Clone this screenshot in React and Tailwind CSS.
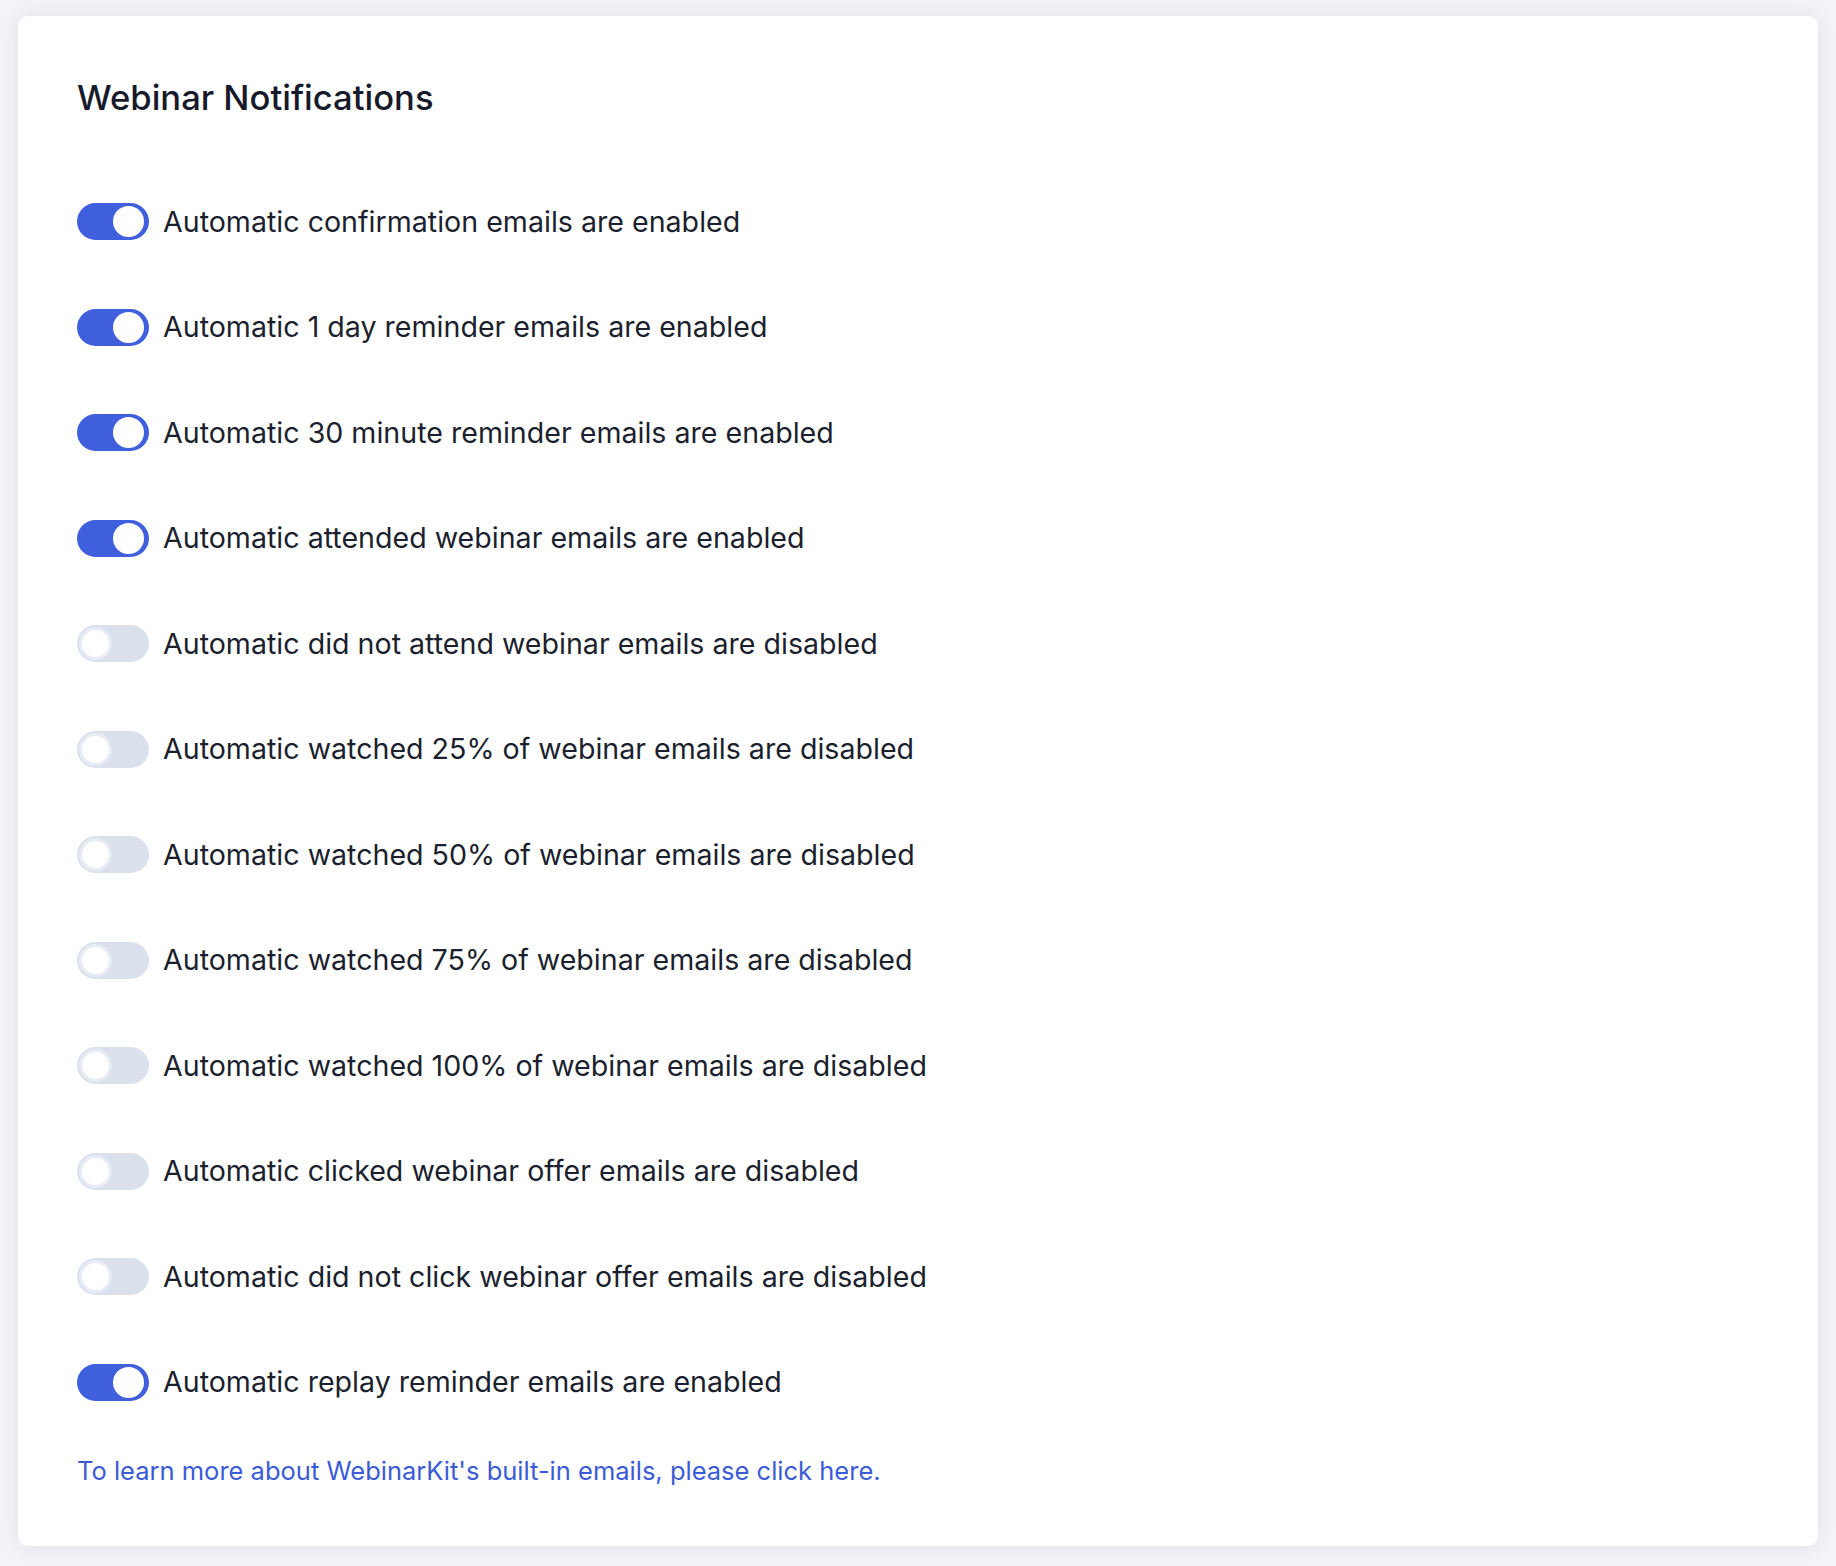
import React, { useState } from 'react';

const initialSettings = [
    { key: 'confirmation', label: 'confirmation', on: true },
    { key: 'oneDay', label: '1 day reminder', on: true },
    { key: 'thirtyMin', label: '30 minute reminder', on: true },
    { key: 'attended', label: 'attended webinar', on: true },
    { key: 'notAttended', label: 'did not attend webinar', on: false },
    { key: 'watched25', label: 'watched 25% of webinar', on: false },
    { key: 'watched50', label: 'watched 50% of webinar', on: false },
    { key: 'watched75', label: 'watched 75% of webinar', on: false },
    { key: 'watched100', label: 'watched 100% of webinar', on: false },
    { key: 'clickedOffer', label: 'clicked webinar offer', on: false },
    { key: 'notClickedOffer', label: 'did not click webinar offer', on: false },
    { key: 'replay', label: 'replay reminder', on: true },
];

const Toggle = ({ checked, onChange }) => (
    <button
        type="button"
        onClick={onChange}
        className={
            checked
                ? 'flex h-[37px] w-[72px] shrink-0 items-center justify-end rounded-full bg-[#3f5fdc] px-[5px]'
                : 'flex h-[37px] w-[72px] shrink-0 items-center justify-start rounded-full bg-[#dbe1ec] px-[2px]'
        }
    >
        <span
            className={
                checked
                    ? 'block h-[31px] w-[31px] rounded-full bg-white'
                    : 'block h-[33px] w-[33px] rounded-full border-[3px] border-[#e7ebf3] bg-white'
            }
        />
    </button>
);

const App = () => {
    const [settings, setSettings] = useState(initialSettings);

    const flip = (key) => {
        setSettings((prev) => prev.map((s) => (s.key === key ? { ...s, on: !s.on } : s)));
    };

    return (
        <div className="h-[1566px] bg-[#f3f4f7] px-[18px] pt-[16px] font-['Inter',sans-serif]">
            <div className="rounded-[10px] bg-white px-[59px] pt-[61px] pb-[57px] shadow-[0_0_22px_rgba(30,40,70,0.09)]">
                <h1 className="text-[34.6px] font-medium leading-[41px] text-[#171a2b]">Webinar Notifications</h1>

                <div className="mt-[51px] flex flex-col">
                    {settings.map((s) => (
                        <div key={s.key} className="flex h-[105.5px] items-center gap-[14px]">
                            <Toggle checked={s.on} onChange={() => flip(s.key)} />
                            <span className="text-[28.6px] leading-[36px] text-[#1c1f2e]">
                                Automatic {s.label} emails are {s.on ? 'enabled' : 'disabled'}
                            </span>
                        </div>
                    ))}
                </div>

                <a href="#" className="mt-[18px] block text-[25.5px] leading-[36px] text-[#3b5bd6]">
                    To learn more about WebinarKit's built-in emails, please click here.
                </a>
            </div>
        </div>
    );
};

export default App;
